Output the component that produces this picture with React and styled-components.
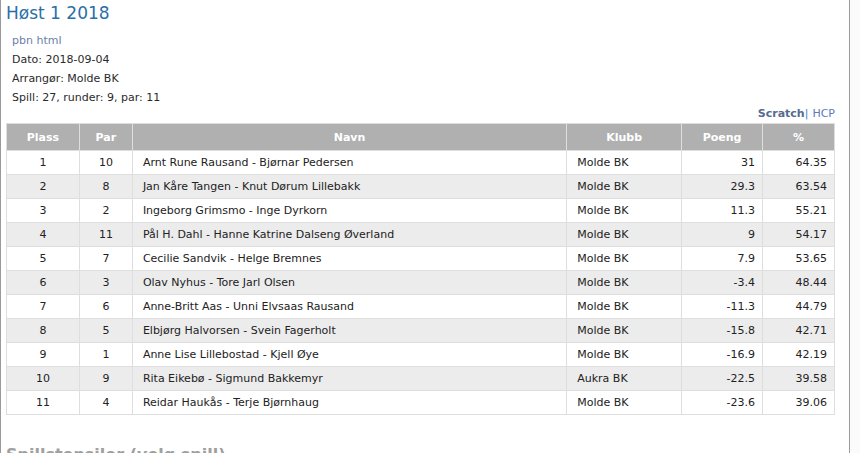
import React from "react";
import styled, { createGlobalStyle } from "styled-components";

const Global = createGlobalStyle`
  html, body { margin: 0; padding: 0; background: #fbfbfb; }
  body { font-family: "DejaVu Sans", Verdana, sans-serif; font-size: 11px; color: #222; }
`;

const Page = styled.div`
  width: 850px;
  height: 453px;
  overflow: hidden;
  background: #fff;
  border-left: 1px solid #9a9a9a;
  border-right: 1px solid #9a9a9a;
  padding: 0 13px 0 5px;
  box-sizing: border-box;
`;

const Title = styled.h1`
  margin: 0;
  padding-top: 3px;
  font-size: 17px;
  font-weight: normal;
  color: #2a6fa8;
  line-height: 20px;
`;

const Info = styled.div`
  padding: 8px 0 0 6px;
  display: flex;
  flex-direction: column;
`;

const InfoLine = styled.div`
  line-height: 19px;
  color: ${(p) => (p.$link ? "#6c7fa8" : "#2a2a2a")};
`;

const ModeBar = styled.div`
  display: flex;
  justify-content: flex-end;
  padding-right: 1px;
  line-height: 14px;
  font-size: 11px;
`;

const ModeActive = styled.span`
  font-weight: bold;
  color: #556b8f;
`;

const ModeSep = styled.span`
  color: #3f86c8;
  margin-right: 4px;
`;

const ModeLink = styled.span`
  color: #5b7db8;
`;

const Table = styled.table`
  margin-top: 2px;
  width: 829px;
  border-collapse: collapse;
  border: 1px solid #dedede;
`;

const Th = styled.th`
  background: #b0b0b0;
  color: #fff;
  font-weight: bold;
  height: 26px;
  border: 1px solid #dedede;
  border-top: 0;
  padding: 0;
  text-align: center;
`;

const Row = styled.tr`
  background: ${(p) => (p.$alt ? "#ececec" : "#fff")};
`;

const Td = styled.td`
  height: 23px;
  border: 1px solid #dedede;
  padding: 0 ${(p) => (p.$align === "right" ? "7px" : "10px")};
  text-align: ${(p) => p.$align || "left"};
  color: #222;
`;

const Footer = styled.h2`
  margin: 30px 0 0 0;
  font-size: 16px;
  line-height: 20px;
  font-weight: bold;
  color: #a0a0a0;
`;

const rows = [
  [1, 10, "Arnt Rune Rausand - Bjørnar Pedersen", "Molde BK", "31", "64.35"],
  [2, 8, "Jan Kåre Tangen - Knut Dørum Lillebakk", "Molde BK", "29.3", "63.54"],
  [3, 2, "Ingeborg Grimsmo - Inge Dyrkorn", "Molde BK", "11.3", "55.21"],
  [4, 11, "Pål H. Dahl - Hanne Katrine Dalseng Øverland", "Molde BK", "9", "54.17"],
  [5, 7, "Cecilie Sandvik - Helge Bremnes", "Molde BK", "7.9", "53.65"],
  [6, 3, "Olav Nyhus - Tore Jarl Olsen", "Molde BK", "-3.4", "48.44"],
  [7, 6, "Anne-Britt Aas - Unni Elvsaas Rausand", "Molde BK", "-11.3", "44.79"],
  [8, 5, "Elbjørg Halvorsen - Svein Fagerholt", "Molde BK", "-15.8", "42.71"],
  [9, 1, "Anne Lise Lillebostad - Kjell Øye", "Molde BK", "-16.9", "42.19"],
  [10, 9, "Rita Eikebø - Sigmund Bakkemyr", "Aukra BK", "-22.5", "39.58"],
  [11, 4, "Reidar Haukås - Terje Bjørnhaug", "Molde BK", "-23.6", "39.06"],
];

export default function App() {
  return (
    <>
      <Global />
      <Page>
        <Title>Høst 1 2018</Title>
        <Info>
          <InfoLine $link>pbn html</InfoLine>
          <InfoLine>Dato: 2018-09-04</InfoLine>
          <InfoLine>Arrangør: Molde BK</InfoLine>
          <InfoLine>Spill: 27, runder: 9, par: 11</InfoLine>
        </Info>
        <ModeBar>
          <ModeActive>Scratch</ModeActive>
          <ModeSep>|</ModeSep>
          <ModeLink>HCP</ModeLink>
        </ModeBar>
        <Table>
          <colgroup>
            <col style={{ width: 73 }} />
            <col style={{ width: 53 }} />
            <col style={{ width: 435 }} />
            <col style={{ width: 115 }} />
            <col style={{ width: 81 }} />
            <col style={{ width: 72 }} />
          </colgroup>
          <thead>
            <tr>
              <Th>Plass</Th>
              <Th>Par</Th>
              <Th>Navn</Th>
              <Th>Klubb</Th>
              <Th>Poeng</Th>
              <Th>%</Th>
            </tr>
          </thead>
          <tbody>
            {rows.map((r, i) => (
              <Row key={r[0]} $alt={i % 2 === 1}>
                <Td $align="center">{r[0]}</Td>
                <Td $align="center">{r[1]}</Td>
                <Td>{r[2]}</Td>
                <Td>{r[3]}</Td>
                <Td $align="right">{r[4]}</Td>
                <Td $align="right">{r[5]}</Td>
              </Row>
            ))}
          </tbody>
        </Table>
        <Footer>Spillstensiler (velg spill)</Footer>
      </Page>
    </>
  );
}
